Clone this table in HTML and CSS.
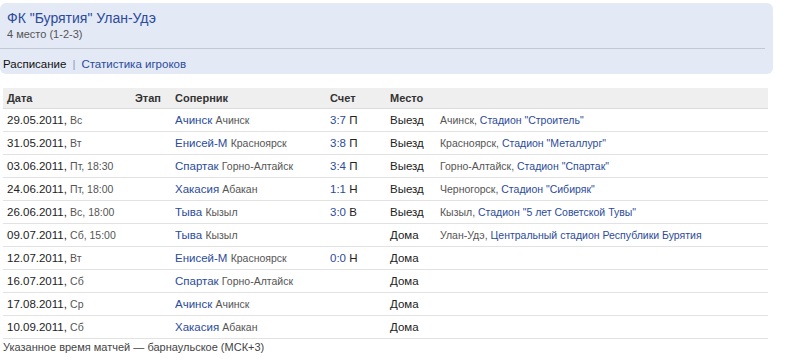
FILE: index.html
```html
<!DOCTYPE html>
<html lang="ru">
<head>
<meta charset="utf-8">
<title>ФК "Бурятия" Улан-Удэ</title>
<link rel="stylesheet" href="styles.css">
</head>
<body>
<div class="page">
  <div class="team-box">
    <div class="team-head">
      <div class="team-name"><a href="#">ФК "Бурятия" Улан-Удэ</a></div>
      <div class="team-place">4 место (1-2-3)</div>
    </div>
    <div class="team-nav">
      <span class="current">Расписание</span><span class="sep">|</span><a href="#">Статистика игроков</a>
    </div>
  </div>

  <table class="games">
    <thead>
      <tr><th class="c-date">Дата</th><th class="c-stage">Этап</th><th class="c-opp">Соперник</th><th class="c-score">Счет</th><th class="c-place">Место</th><th class="c-venue"></th></tr>
    </thead>
    <tbody>
      <tr><td>29.05.2011, <small>Вс</small></td><td></td><td><a href="#">Ачинск</a> <small>Ачинск</small></td><td><a href="#">3:7</a> П</td><td>Выезд</td><td class="venue">Ачинск, <a href="#">Стадион "Строитель"</a></td></tr>
      <tr><td>31.05.2011, <small>Вт</small></td><td></td><td><a href="#">Енисей-М</a> <small>Красноярск</small></td><td><a href="#">3:8</a> П</td><td>Выезд</td><td class="venue">Красноярск, <a href="#">Стадион "Металлург"</a></td></tr>
      <tr><td>03.06.2011, <small>Пт, 18:30</small></td><td></td><td><a href="#">Спартак</a> <small>Горно-Алтайск</small></td><td><a href="#">3:4</a> П</td><td>Выезд</td><td class="venue">Горно-Алтайск, <a href="#">Стадион "Спартак"</a></td></tr>
      <tr><td>24.06.2011, <small>Пт, 18:00</small></td><td></td><td><a href="#">Хакасия</a> <small>Абакан</small></td><td><a href="#">1:1</a> Н</td><td>Выезд</td><td class="venue">Черногорск, <a href="#">Стадион "Сибиряк"</a></td></tr>
      <tr><td>26.06.2011, <small>Вс, 18:00</small></td><td></td><td><a href="#">Тыва</a> <small>Кызыл</small></td><td><a href="#">3:0</a> В</td><td>Выезд</td><td class="venue">Кызыл, <a href="#">Стадион "5 лет Советской Тувы"</a></td></tr>
      <tr><td>09.07.2011, <small>Сб, 15:00</small></td><td></td><td><a href="#">Тыва</a> <small>Кызыл</small></td><td></td><td>Дома</td><td class="venue">Улан-Удэ, <a href="#">Центральный стадион Республики Бурятия</a></td></tr>
      <tr><td>12.07.2011, <small>Вт</small></td><td></td><td><a href="#">Енисей-М</a> <small>Красноярск</small></td><td><a href="#">0:0</a> Н</td><td>Дома</td><td class="venue"></td></tr>
      <tr><td>16.07.2011, <small>Сб</small></td><td></td><td><a href="#">Спартак</a> <small>Горно-Алтайск</small></td><td></td><td>Дома</td><td class="venue"></td></tr>
      <tr><td>17.08.2011, <small>Ср</small></td><td></td><td><a href="#">Ачинск</a> <small>Ачинск</small></td><td></td><td>Дома</td><td class="venue"></td></tr>
      <tr><td>10.09.2011, <small>Сб</small></td><td></td><td><a href="#">Хакасия</a> <small>Абакан</small></td><td></td><td>Дома</td><td class="venue"></td></tr>
    </tbody>
  </table>
  <div class="note">Указанное время матчей — барнаульское (МСК+3)</div>
</div>
</body>
</html>
```

FILE: styles.css
```css
html, body {
  margin: 0;
  padding: 0;
  background: #fff;
}
body {
  font-family: "Liberation Sans", Arial, sans-serif;
  font-size: 11px;
  color: #222;
}
a {
  color: #2b4b9b;
  text-decoration: none;
}
.page {
  padding: 3px 0 0 0;
  width: 773px;
}
.team-box {
  background: #e4e9f6;
  border-radius: 6px;
  padding: 0 8px 0 0;
  height: 71px;
  display: flex;
  flex-direction: column;
}
.team-head {
  padding: 7px 0 0 7px;
  height: 46px;
  border-bottom: 1px solid #c2c8d4;
  box-sizing: border-box;
}
.team-name {
  font-size: 14px;
  line-height: 16px;
}
.team-place {
  font-size: 11px;
  color: #555;
  line-height: 13px;
  margin-top: 2px;
}
.team-nav {
  padding: 8px 0 0 3px;
  font-size: 11.5px;
  line-height: 14px;
}
.team-nav .current {
  color: #111;
}
.team-nav .sep {
  color: #8a9ac0;
  margin: 0 6px;
}
.games {
  margin: 14px 0 0 3px;
  width: 765px;
  border-collapse: collapse;
  font-size: 11.5px;
}
.games th {
  background: #efefef;
  color: #333;
  font-weight: bold;
  font-size: 11px;
  text-align: left;
  height: 20px;
  padding: 0 0 0 4px;
  border-bottom: 1px solid #dcdcdc;
}
.games td {
  height: 22px;
  padding: 0 0 0 4px;
  border-bottom: 1px solid #e2e2e2;
  white-space: nowrap;
}
.games small {
  font-size: 10.5px;
  color: #555;
}
.c-date { width: 124px; }
.c-stage { width: 36px; }
.c-opp { width: 151px; }
.c-score { width: 56px; }
.c-place { width: 46px; }
.games td.venue {
  font-size: 10.5px;
  color: #555;
}
.note {
  font-size: 11px;
  color: #444;
  padding: 2px 0 0 3px;
}
```
